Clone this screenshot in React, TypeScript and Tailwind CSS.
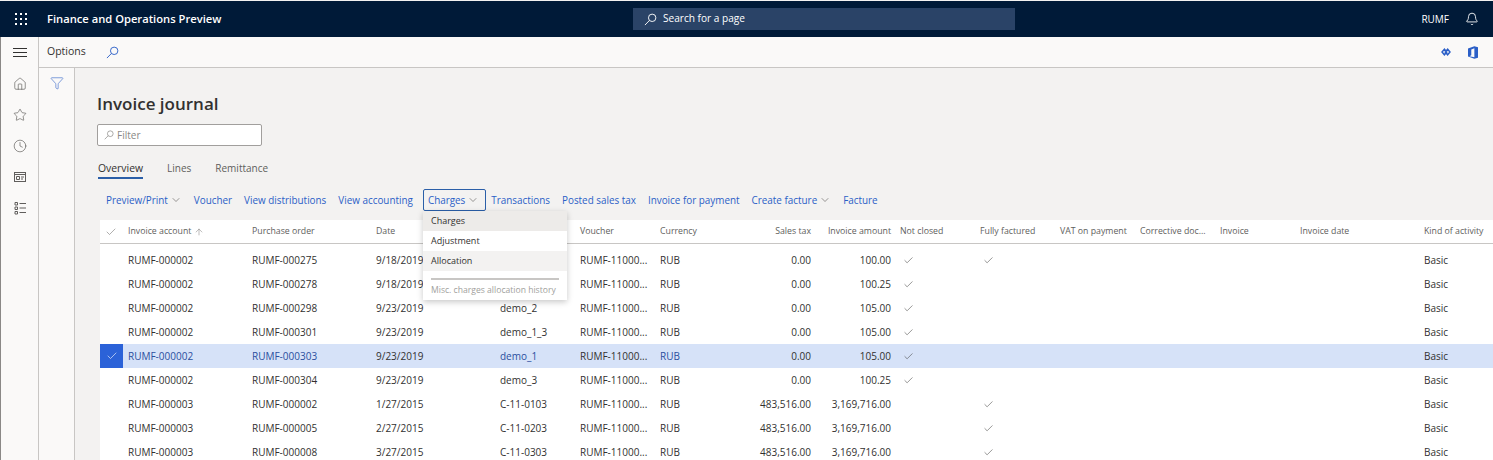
import { ArrowUp, Bell, Check, ChevronDown, Clock, Filter, Home, Star } from "lucide-react";

type Row = {
  account: string;
  order: string;
  date: string;
  invoice: string;
  tax: string;
  amount: string;
  notClosed?: boolean;
  factured?: boolean;
  selected?: boolean;
};

const rows: Row[] = [
  { account: "RUMF-000002", order: "RUMF-000275", date: "9/18/2019", invoice: "", tax: "0.00", amount: "100.00", notClosed: true, factured: true },
  { account: "RUMF-000002", order: "RUMF-000278", date: "9/18/2019", invoice: "", tax: "0.00", amount: "100.25", notClosed: true },
  { account: "RUMF-000002", order: "RUMF-000298", date: "9/23/2019", invoice: "demo_2", tax: "0.00", amount: "105.00", notClosed: true },
  { account: "RUMF-000002", order: "RUMF-000301", date: "9/23/2019", invoice: "demo_1_3", tax: "0.00", amount: "105.00", notClosed: true },
  { account: "RUMF-000002", order: "RUMF-000303", date: "9/23/2019", invoice: "demo_1", tax: "0.00", amount: "105.00", notClosed: true, selected: true },
  { account: "RUMF-000002", order: "RUMF-000304", date: "9/23/2019", invoice: "demo_3", tax: "0.00", amount: "100.25", notClosed: true },
  { account: "RUMF-000003", order: "RUMF-000002", date: "1/27/2015", invoice: "C-11-0103", tax: "483,516.00", amount: "3,169,716.00", factured: true },
  { account: "RUMF-000003", order: "RUMF-000005", date: "2/27/2015", invoice: "C-11-0203", tax: "483,516.00", amount: "3,169,716.00", factured: true },
  { account: "RUMF-000003", order: "RUMF-000008", date: "3/27/2015", invoice: "C-11-0303", tax: "483,516.00", amount: "3,169,716.00", factured: true },
];

const gridCols = "grid grid-cols-[28px_124px_124px_124px_80px_80px_80px_80px_80px_80px_80px_80px_80px_80px_124px_1fr]";

function Waffle() {
  return (
    <svg width="14" height="14" viewBox="0 0 14 14" fill="white">
      {[1, 6, 11].map((y) =>
        [1, 6, 11].map((x) => <rect key={`${x}-${y}`} x={x} y={y} width="2" height="2" />)
      )}
    </svg>
  );
}

function SearchGlyph({ size, className }: { size: number; className?: string }) {
  return (
    <svg width={size} height={size} viewBox="0 0 14 14" fill="none" stroke="currentColor" className={className}>
      <circle cx="8.8" cy="5.2" r="4" />
      <path d="M5.9 8 1 13" />
    </svg>
  );
}

function Workspace() {
  return (
    <svg width="14" height="14" viewBox="0 0 14 14" fill="none" stroke="#605e5c">
      <rect x="1.5" y="2.5" width="11" height="9" />
      <path d="M1.5 4.5h11M3.5 6.5h3v3h-3zM8 7h3M8 9h2" />
    </svg>
  );
}

function ListIcon() {
  return (
    <svg width="14" height="14" viewBox="0 0 14 14" fill="none" stroke="#605e5c">
      <path d="M2 1.5h2.5v2.5H2zM2 6h2.5v2.5H2zM2 10.5h2.5V13H2zM6.5 2.5H13M6.5 7H13M6.5 11.5H13" />
    </svg>
  );
}

function Connector() {
  return (
    <svg width="10" height="8" viewBox="0 0 12 10" fill="none" stroke="#2b5fc7" strokeWidth="1.8">
      <path d="M4 1.5 1 5l3 3.5L7 5zM8 1.5 5 5l3 3.5L11 5z" />
    </svg>
  );
}

function OfficeLogo() {
  return (
    <svg width="10" height="13" viewBox="0 0 11 14" fill="#2b5fc7">
      <path d="M7 0 0 2.6v8.8L7 14l4-1.2V1.2zM7 12.2 1.6 11l2-1V3.8L7 2.4z" />
    </svg>
  );
}

function CommandButton({ label, menu }: { label: string; menu?: boolean }) {
  return (
    <span className="flex items-center gap-[2px] whitespace-nowrap text-[9.9px] text-[#2b5fc7]">
      {label}
      {menu && <ChevronDown size={12} strokeWidth={1.1} className="text-[#484644]" />}
    </span>
  );
}

function RailIcon({ children }: { children: React.ReactNode }) {
  return <div className="flex h-[31px] w-full items-center justify-center">{children}</div>;
}

export default function App() {
  return (
    <div className="flex h-[460px] w-[1493px] flex-col overflow-hidden bg-[#f3f2f1] font-['Open_Sans','Liberation_Sans',sans-serif] text-[10px] text-[#323130]">
      <header className="mt-px flex h-[36px] shrink-0 items-center bg-[#001a38] text-white">
        <div className="flex w-[41px] justify-center">
          <Waffle />
        </div>
        <span className="ml-[6px] w-[586px] text-[11.2px] font-semibold">Finance and Operations Preview</span>
        <div className="flex h-[22px] w-[382px] items-center gap-[6px] bg-[#2a4367] pl-[11px] text-[10.1px]">
          <SearchGlyph size={13} />
          Search for a page
        </div>
        <span className="ml-auto text-[10px]">RUMF</span>
        <Bell size={14} strokeWidth={1.5} className="ml-[16px] mr-[14px]" />
      </header>

      <div className="flex min-h-0 flex-1 border-l border-[#8a8886]">
        <nav className="flex w-[38px] shrink-0 flex-col items-center border-r border-[#c8c6c4] bg-[#faf9f8] text-[#484644]">
          <div className="flex h-[31px] w-[14px] flex-col justify-center gap-[3px]">
            <div className="h-px w-full bg-[#323130]" />
            <div className="h-px w-full bg-[#323130]" />
            <div className="h-px w-full bg-[#323130]" />
          </div>
          <RailIcon>
            <Home size={14} strokeWidth={1} />
          </RailIcon>
          <RailIcon>
            <Star size={14} strokeWidth={1} />
          </RailIcon>
          <RailIcon>
            <Clock size={14} strokeWidth={1} />
          </RailIcon>
          <RailIcon>
            <Workspace />
          </RailIcon>
          <RailIcon>
            <ListIcon />
          </RailIcon>
        </nav>

        <div className="flex min-w-0 flex-1 flex-col">
          <div className="flex h-[31px] shrink-0 items-center border-b border-[#c8c6c4] bg-[#faf9f8] pl-[8px]">
            <span className="text-[10.5px]">Options</span>
            <SearchGlyph size={13} className="ml-[20px] text-[#2b5fc7]" />
            <div className="ml-auto mr-[15px] flex items-center gap-[17px]">
              <Connector />
              <OfficeLogo />
            </div>
          </div>

          <div className="flex min-h-0 flex-1">
            <aside className="flex w-[36px] shrink-0 justify-center border-r border-[#c8c6c4] bg-[#faf9f8] pt-[8px]">
              <Filter size={14} strokeWidth={1} className="text-[#2b5fc7]" />
            </aside>

            <main className="relative min-w-0 flex-1 pl-[22px]">
              <h1 className="mt-[24px] text-[17px] font-semibold leading-[24px]">Invoice journal</h1>

              <div className="mt-[8px] flex h-[22px] w-[165px] items-center gap-[3px] rounded-[2px] border border-[#a19f9d] bg-white pl-[6px] text-[#8a8886]">
                <SearchGlyph size={10} />
                Filter
              </div>

              <div className="mt-[11px] flex h-[24px] items-start gap-[24px] pl-px pt-[4px]">
                <span className="relative text-[10.4px] leading-[15px] text-[#323130] after:absolute after:-bottom-[3px] after:left-0 after:h-[2px] after:w-full after:bg-[#2b5fa8]">
                  Overview
                </span>
                <span className="leading-[15px] text-[#605e5c]">Lines</span>
                <span className="leading-[15px] text-[#605e5c]">Remittance</span>
              </div>

              <div className="mt-[8px] flex h-[22px] items-center gap-[12px] pl-[9px]">
                <CommandButton label="Preview/Print" menu />
                <CommandButton label="Voucher" />
                <CommandButton label="View distributions" />
                <CommandButton label="View accounting" />
                <div className="-ml-[2px] -mr-[7px] flex h-[22px] items-center rounded-[2px] border border-[#2b5fa8] pl-[4px] pr-[6px]">
                  <CommandButton label="Charges" menu />
                </div>
                <CommandButton label="Transactions" />
                <CommandButton label="Posted sales tax" />
                <CommandButton label="Invoice for payment" />
                <CommandButton label="Create facture" menu />
                <CommandButton label="Facture" />
              </div>

              <div className="relative ml-[3px] mt-[9px] bg-white">
                <div className={`${gridCols} h-[24px] items-center whitespace-nowrap border-b border-[#c8c6c4] pt-px text-[8.75px] text-[#605e5c]`}>
                  <Check size={12} strokeWidth={1} className="ml-[5px]" />
                  <span className="flex items-center gap-[3px]">
                    Invoice account <ArrowUp size={10} strokeWidth={1} />
                  </span>
                  <span>Purchase order</span>
                  <span>Date</span>
                  <span>Invoice</span>
                  <span>Voucher</span>
                  <span>Currency</span>
                  <span className="pr-[9px] text-right">Sales tax</span>
                  <span className="pr-[9px] text-right">Invoice amount</span>
                  <span>Not closed</span>
                  <span>Fully factured</span>
                  <span>VAT on payment</span>
                  <span className="pr-[13px]">
                    <span className="block truncate">Corrective document</span>
                  </span>
                  <span>Invoice</span>
                  <span>Invoice date</span>
                  <span>Kind of activity</span>
                </div>

                <div className="pt-[4px]">
                  {rows.map((row) => (
                    <div
                      key={row.order + row.account}
                      className={`${gridCols} h-[24px] items-center ${row.selected ? "bg-[#d6e2f8]" : ""}`}
                    >
                      {row.selected ? (
                        <div className="flex h-[24px] w-[23px] items-center justify-center bg-[#2b62d8] text-white">
                          <Check size={12} strokeWidth={1.2} />
                        </div>
                      ) : (
                        <span />
                      )}
                      <span className={row.selected ? "text-[#2b4f9e]" : ""}>{row.account}</span>
                      <span className={row.selected ? "text-[#2b4f9e]" : ""}>{row.order}</span>
                      <span>{row.date}</span>
                      <span className={row.selected ? "text-[#2b4f9e]" : ""}>{row.invoice}</span>
                      <span>RUMF-11000...</span>
                      <span className={row.selected ? "text-[#2b4f9e]" : ""}>RUB</span>
                      <span className="pr-[9px] text-right">{row.tax}</span>
                      <span className="pr-[9px] text-right">{row.amount}</span>
                      <span className="pl-[3px]">{row.notClosed && <Check size={11} strokeWidth={1.1} />}</span>
                      <span className="pl-[3px]">{row.factured && <Check size={11} strokeWidth={1.1} />}</span>
                      <span />
                      <span />
                      <span />
                      <span />
                      <span>Basic</span>
                    </div>
                  ))}
                </div>

                <div className="absolute left-[323px] top-[-9px] w-[144px] bg-white shadow-[0_2px_6px_rgba(0,0,0,0.22)]">
                  <div className="flex h-[20px] items-center bg-[#edebe9] pl-[8px] text-[9px]">Charges</div>
                  <div className="flex h-[20px] items-center pl-[8px] text-[9px]">Adjustment</div>
                  <div className="flex h-[20px] items-center bg-[#f3f2f1] pl-[8px] text-[9px]">Allocation</div>
                  <div className="mx-[8px] mt-[7px] h-[2px] bg-[#c8c6c4]" />
                  <div className="flex h-[20px] items-center whitespace-nowrap pl-[8px] text-[8.6px] text-[#a19f9d]">Misc. charges allocation history</div>
                </div>
              </div>
            </main>
          </div>
        </div>
      </div>
    </div>
  );
}
